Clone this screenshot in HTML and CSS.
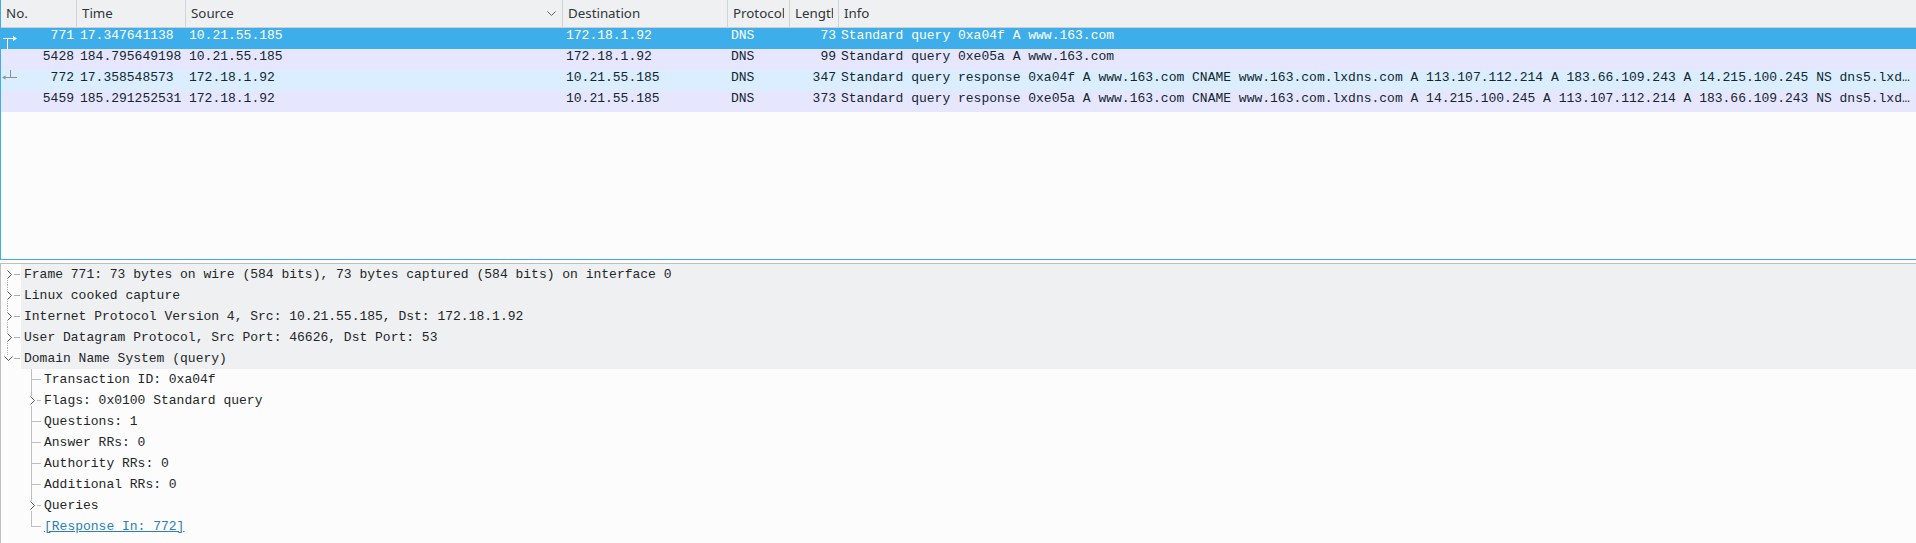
FILE: index.html
```html
<!DOCTYPE html>
<html>
<head>
<meta charset="utf-8">
<link rel="stylesheet" href="styles.css">
</head>
<body>
<div class="app">
  <section class="plist">
    <div class="grid phead">
      <div class="hc"><span>No.</span></div>
      <div class="hc"><span>Time</span></div>
      <div class="hc sorted"><span>Source</span><svg class="sort" width="9" height="5" viewBox="0 0 9 5"><path d="M0.5 0.5 L4.5 4.5 L8.5 0.5" fill="none" stroke="#5d6165" stroke-width="1"/></svg></div>
      <div class="hc"><span>Destination</span></div>
      <div class="hc"><span>Protocol</span></div>
      <div class="hc"><span>Length</span></div>
      <div class="hc last"><span>Info</span></div>
    </div>
    <div class="grid pkt sel">
      <div class="c no"><svg class="rel" width="18" height="21" viewBox="0 0 18 21"><path d="M2 10.5 H13 M6.5 10.5 V21" stroke="#fff" stroke-width="1" fill="none"/><path d="M12 8 L16 10.5 L12 13 Z" fill="#fff"/></svg><span>771</span></div>
      <div class="c">17.347641138</div>
      <div class="c">10.21.55.185</div>
      <div class="c">172.18.1.92</div>
      <div class="c">DNS</div>
      <div class="c num">73</div>
      <div class="c info">Standard query 0xa04f A www.163.com</div>
    </div>
    <div class="grid pkt lav">
      <div class="c no"><span></span><span>5428</span></div>
      <div class="c">184.795649198</div>
      <div class="c">10.21.55.185</div>
      <div class="c">172.18.1.92</div>
      <div class="c">DNS</div>
      <div class="c num">99</div>
      <div class="c info">Standard query 0xe05a A www.163.com</div>
    </div>
    <div class="grid pkt sky">
      <div class="c no"><svg class="rel" width="18" height="21" viewBox="0 0 18 21"><path d="M3 7.5 H16 M9.5 0 V7.5" stroke="#8e9194" stroke-width="1" fill="none"/><path d="M1 7.5 L4.5 5.5 L4.5 9.5 Z" fill="#8e9194"/></svg><span>772</span></div>
      <div class="c">17.358548573</div>
      <div class="c">172.18.1.92</div>
      <div class="c">10.21.55.185</div>
      <div class="c">DNS</div>
      <div class="c num">347</div>
      <div class="c info">Standard query response 0xa04f A www.163.com CNAME www.163.com.lxdns.com A 113.107.112.214 A 183.66.109.243 A 14.215.100.245 NS dns5.lxd…</div>
    </div>
    <div class="grid pkt lav">
      <div class="c no"><span></span><span>5459</span></div>
      <div class="c">185.291252531</div>
      <div class="c">172.18.1.92</div>
      <div class="c">10.21.55.185</div>
      <div class="c">DNS</div>
      <div class="c num">373</div>
      <div class="c info">Standard query response 0xe05a A www.163.com CNAME www.163.com.lxdns.com A 14.215.100.245 A 113.107.112.214 A 183.66.109.243 NS dns5.lxd…</div>
    </div>
  </section>
  <div class="split"></div>
  <section class="tree">
    <div class="node top">
      <span class="g l0 first tk"><svg class="chev" width="8" height="10" viewBox="0 0 8 10"><path d="M1.5 0.5 L5.5 4.5 L1.5 8.5" fill="none" stroke="#4d5154" stroke-width="1"/></svg></span>
      <span class="lbl">Frame 771: 73 bytes on wire (584 bits), 73 bytes captured (584 bits) on interface 0</span>
    </div>
    <div class="node top">
      <span class="g l0 tk"><svg class="chev" width="8" height="10" viewBox="0 0 8 10"><path d="M1.5 0.5 L5.5 4.5 L1.5 8.5" fill="none" stroke="#4d5154" stroke-width="1"/></svg></span>
      <span class="lbl">Linux cooked capture</span>
    </div>
    <div class="node top">
      <span class="g l0 tk"><svg class="chev" width="8" height="10" viewBox="0 0 8 10"><path d="M1.5 0.5 L5.5 4.5 L1.5 8.5" fill="none" stroke="#4d5154" stroke-width="1"/></svg></span>
      <span class="lbl">Internet Protocol Version 4, Src: 10.21.55.185, Dst: 172.18.1.92</span>
    </div>
    <div class="node top">
      <span class="g l0 tk"><svg class="chev" width="8" height="10" viewBox="0 0 8 10"><path d="M1.5 0.5 L5.5 4.5 L1.5 8.5" fill="none" stroke="#4d5154" stroke-width="1"/></svg></span>
      <span class="lbl">User Datagram Protocol, Src Port: 46626, Dst Port: 53</span>
    </div>
    <div class="node top">
      <span class="g l0 last tk"><svg class="chev open" width="10" height="8" viewBox="0 0 10 8"><path d="M0.5 1.5 L4.5 5.5 L8.5 1.5" fill="none" stroke="#4d5154" stroke-width="1"/></svg></span>
      <span class="lbl">Domain Name System (query)</span>
    </div>
    <div class="node">
      <span class="g"></span><span class="g l1 tk"></span>
      <span class="lbl">Transaction ID: 0xa04f</span>
    </div>
    <div class="node">
      <span class="g"></span><span class="g l1 tk"><svg class="chev c1" width="8" height="10" viewBox="0 0 8 10"><path d="M1.5 0.5 L5.5 4.5 L1.5 8.5" fill="none" stroke="#4d5154" stroke-width="1"/></svg></span>
      <span class="lbl">Flags: 0x0100 Standard query</span>
    </div>
    <div class="node">
      <span class="g"></span><span class="g l1 tk"></span>
      <span class="lbl">Questions: 1</span>
    </div>
    <div class="node">
      <span class="g"></span><span class="g l1 tk"></span>
      <span class="lbl">Answer RRs: 0</span>
    </div>
    <div class="node">
      <span class="g"></span><span class="g l1 tk"></span>
      <span class="lbl">Authority RRs: 0</span>
    </div>
    <div class="node">
      <span class="g"></span><span class="g l1 tk"></span>
      <span class="lbl">Additional RRs: 0</span>
    </div>
    <div class="node">
      <span class="g"></span><span class="g l1 tk"><svg class="chev c1" width="8" height="10" viewBox="0 0 8 10"><path d="M1.5 0.5 L5.5 4.5 L1.5 8.5" fill="none" stroke="#4d5154" stroke-width="1"/></svg></span>
      <span class="lbl">Queries</span>
    </div>
    <div class="node">
      <span class="g"></span><span class="g l1 last tk"></span>
      <span class="lbl"><a class="link" href="#">[Response In: 772]</a></span>
    </div>
  </section>
</div>
</body>
</html>
```

FILE: styles.css
```css
* { box-sizing: border-box; }
html, body { margin: 0; padding: 0; }
body {
  width: 1916px;
  height: 543px;
  overflow: hidden;
  background: #fcfcfc;
  font-family: "Liberation Mono", monospace;
  font-size: 13px;
  color: #232629;
}
.app { display: flex; flex-direction: column; height: 543px; }

/* ---------- packet list ---------- */
.plist {
  height: 260px;
  flex: none;
  border-left: 1px solid #3daee9;
  border-bottom: 1px solid #3daee9;
  background: #fcfcfc;
  overflow: hidden;
}
.grid {
  display: grid;
  grid-template-columns: 76px 109px 377px 165px 62px 49px 1fr;
}
.phead {
  height: 28px;
  background: #eff0f1;
  border-bottom: 1px solid #cfd0d2;
  font-family: "Noto Sans", sans-serif;
  font-size: 13.33px;
  color: #31363b;
}
.hc {
  display: flex;
  align-items: center;
  min-width: 0;
  border-right: 1px solid #d3d4d6;
  padding: 0 5px 0 5px;
  line-height: 27px;
  white-space: nowrap;
  overflow: hidden;
}
.hc > span {
  display: block;
  min-width: 0;
  overflow: hidden;
  white-space: nowrap;
}
.hc.last { border-right: none; }
.hc.sorted { justify-content: space-between; padding-right: 6px; }
.sort { display: block; flex: none; }

.pkt {
  height: 21px;
  line-height: 15px;
  color: #12272e;
}
.pkt.sel { background: #3daee9; color: #fff; }
.pkt.lav { background: #e7e6ff; }
.pkt.sky { background: #daeeff; }
.c {
  padding-left: 3px;
  white-space: nowrap;
  overflow: hidden;
}
.c.no {
  display: flex;
  justify-content: space-between;
  padding-left: 0;
  padding-right: 3px;
}
.rel { display: block; flex: none; }
.c.num { text-align: right; padding-left: 0; padding-right: 3px; }
.c.info { padding-left: 2px; padding-right: 2px; }

.split { height: 3px; flex: none; background: #fcfcfc; }

/* ---------- detail tree ---------- */
.tree {
  flex: 1;
  border-top: 1px solid #bcbebf;
  border-left: 1px solid #bcbebf;
  background: #fcfcfc;
}
.node {
  display: flex;
  height: 21px;
  line-height: 21px;
  white-space: nowrap;
}
.g {
  position: relative;
  width: 20px;
  flex: none;
}
.g.l0::before {
  content: "";
  position: absolute;
  left: 6px;
  top: 0;
  bottom: 0;
  border-left: 1px dotted #a9abad;
}
.g.l1::before {
  content: "";
  position: absolute;
  left: 10px;
  top: 0;
  bottom: 0;
  border-left: 1px solid #bcbebf;
}
.g.first::before { top: 10px; }
.g.last::before { bottom: 10px; }
.g.l0.tk::after {
  content: "";
  position: absolute;
  left: 12px;
  right: 1px;
  top: 10px;
  border-top: 1px solid #a9abad;
}
.g.l1.tk::after {
  content: "";
  position: absolute;
  left: 11px;
  right: 0;
  top: 10px;
  border-top: 1px solid #bcbebf;
}
.chev {
  position: absolute;
  left: 5px;
  top: 6px;
  background: #fcfcfc;
  display: block;
  z-index: 1;
}
.chev.open { left: 3px; top: 7px; }
.chev.c1 { left: 8px; }
.lbl {
  flex: 1;
  padding-left: 3px;
  overflow: hidden;
}
.node.top .lbl { background: #eff0f1; }
.link { color: #2980b9; text-decoration: underline; }
```
